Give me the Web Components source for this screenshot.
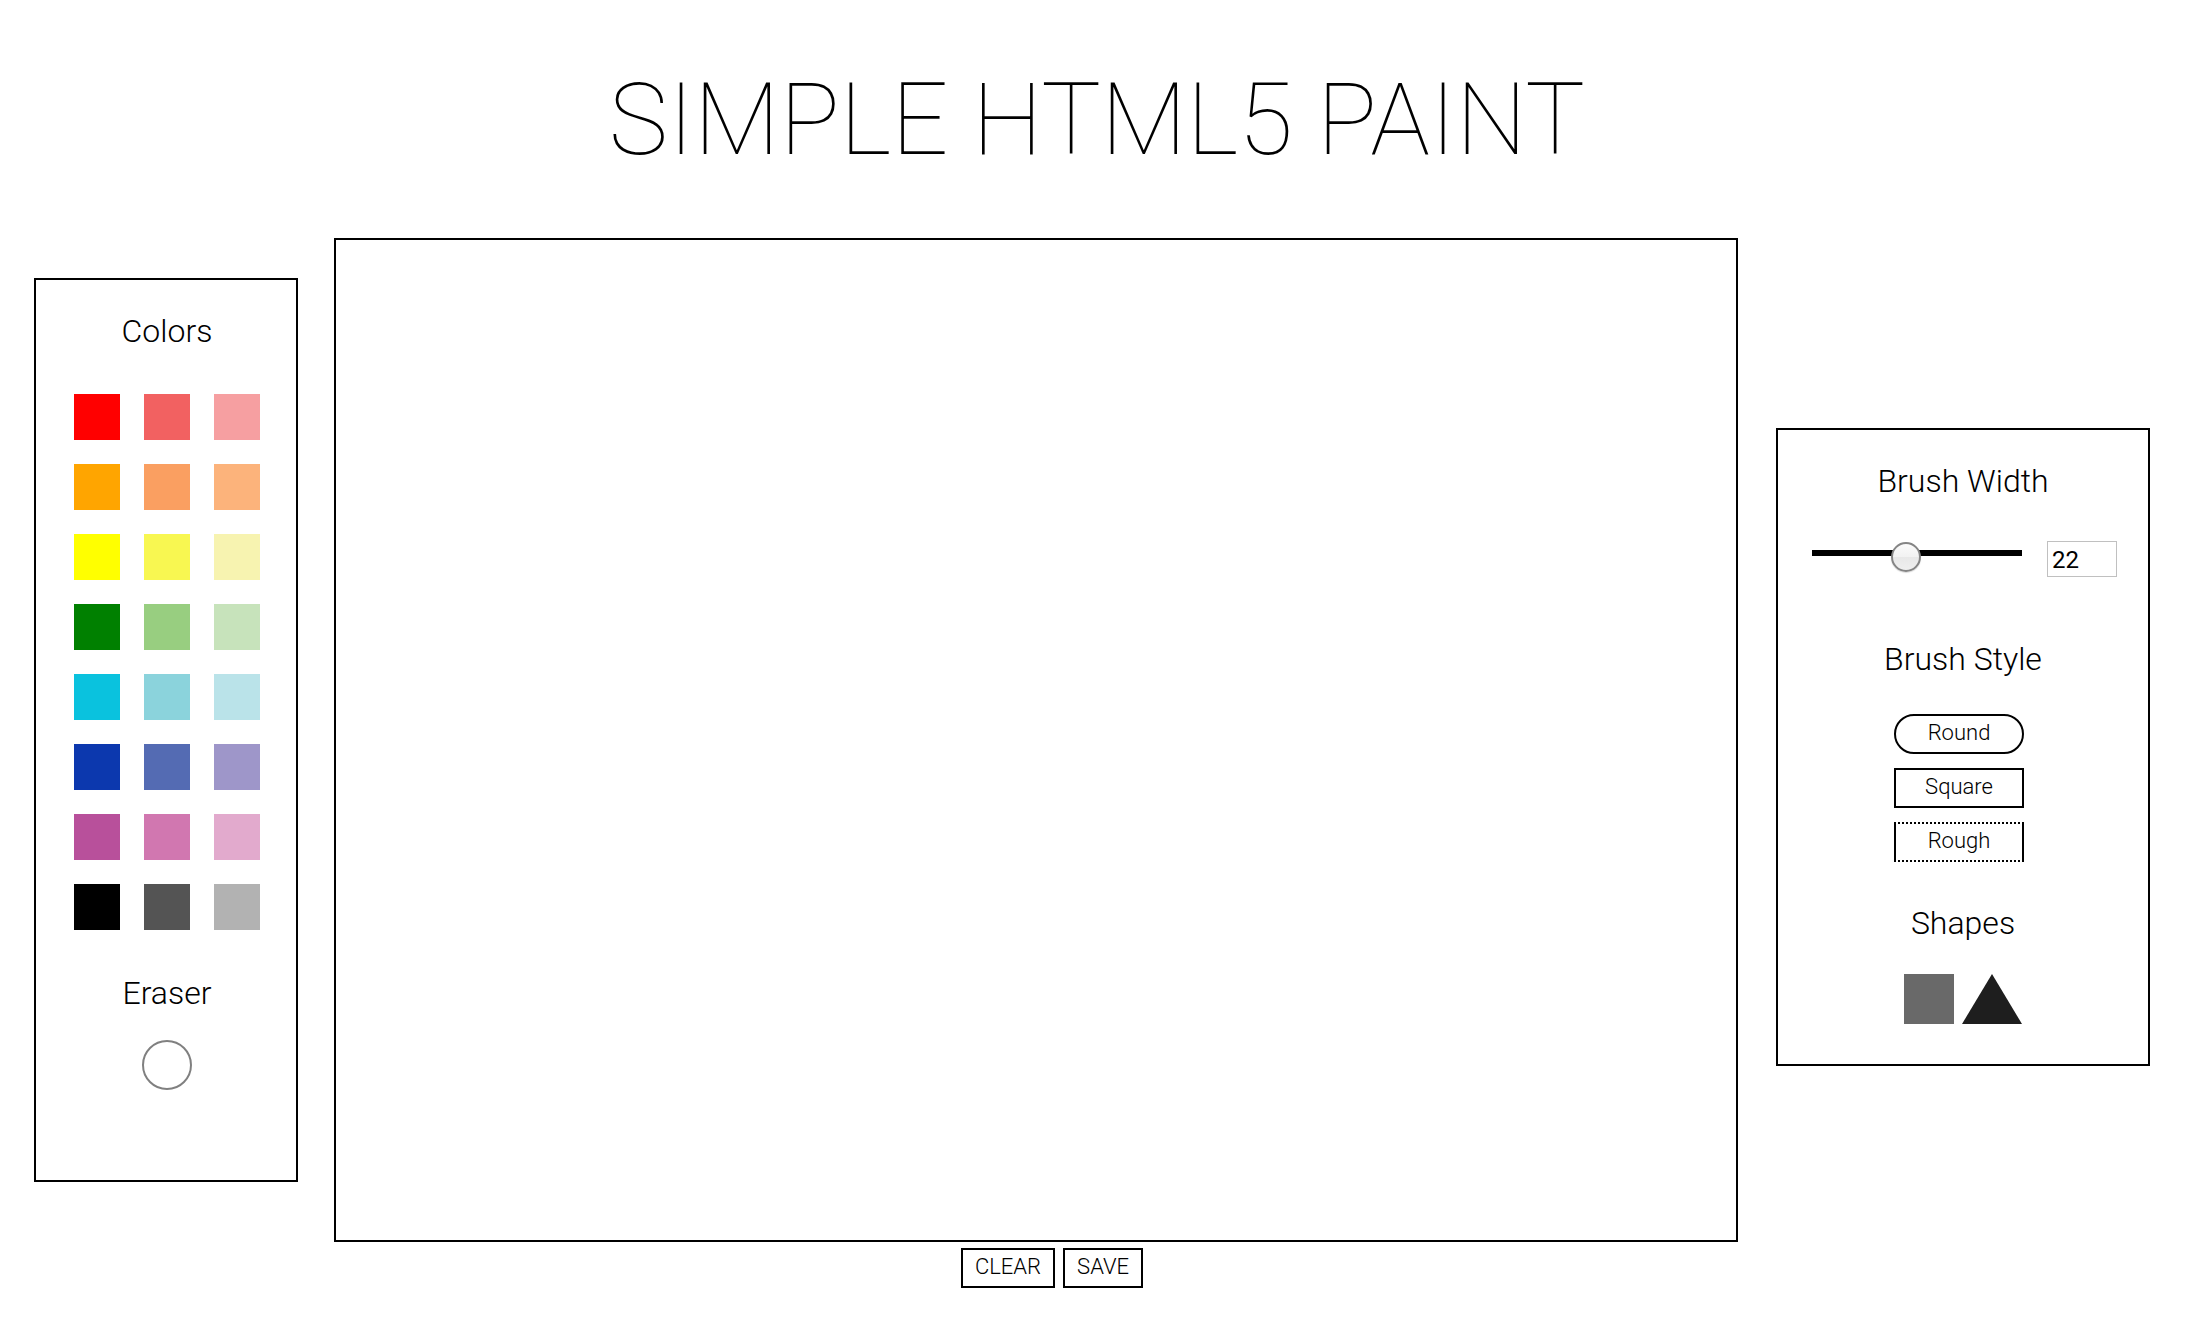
<!DOCTYPE html>
<html lang="en">
<head>
<meta charset="utf-8">
<title>Simple HTML5 Paint</title>
<style>
  body { margin: 0; background: #fff; color: #000; font-family: Roboto, "Liberation Sans", sans-serif; font-weight: 300; }
</style>
</head>
<body>
<paint-app></paint-app>

<template id="paint-app">
  <style>
    :host { display: block; }
    header { padding: 60px 20px 58px; text-align: center; }
    h1 { margin: 0; font-size: 100px; line-height: 120px; font-weight: 100; }
    main { display: flex; align-items: flex-start; padding: 0 44px 0 34px; }
    color-panel { margin-top: 40px; flex: none; }
    paint-canvas { flex: 1; min-width: 0; margin: 0 38px 0 36px; }
    brush-panel { margin-top: 190px; flex: none; }
  </style>
  <header><h1>SIMPLE HTML5 PAINT</h1></header>
  <main>
    <color-panel></color-panel>
    <paint-canvas></paint-canvas>
    <brush-panel></brush-panel>
  </main>
</template>

<template id="tool-button">
  <style>
    :host { display: block; }
    button { display: block; width: 100%; box-sizing: border-box; margin: 0; height: 40px; padding: 0 12px 2px; border: 2px solid #000; background: transparent; color: inherit; font: inherit; font-size: 22px; line-height: 34px; cursor: pointer; }
    :host([shape="round"]) button { border-radius: 20px; }
    :host([shape="rough"]) button { border-style: dotted solid; }
  </style>
  <button type="button"><slot></slot></button>
</template>

<template id="tool-heading">
  <style>
    :host { display: block; }
    h2 { margin: 0; font-size: 32px; line-height: 40px; font-weight: 300; text-align: center; }
  </style>
  <h2><slot></slot></h2>
</template>

<template id="color-panel">
  <style>
    :host { display: block; box-sizing: border-box; width: 264px; padding: 31px 0 90px 2px; border: 2px solid #000; }
    .swatches { display: grid; grid-template-columns: repeat(3, 46px); justify-content: center; gap: 24px; padding: 43px 0; }
    .eraser { display: block; box-sizing: border-box; width: 50px; height: 50px; margin: 27px auto 0; padding: 0; border: 2px solid #808080; border-radius: 50%; background: #fff; }
  </style>
  <tool-heading>Colors</tool-heading>
  <div class="swatches"></div>
  <tool-heading>Eraser</tool-heading>
  <button class="eraser" type="button" aria-label="Eraser"></button>
</template>

<template id="color-swatch">
  <style>
    :host { display: block; }
    button { display: block; width: 46px; height: 46px; padding: 0; border: 0; background: var(--swatch); cursor: pointer; }
  </style>
  <button type="button"></button>
</template>

<template id="paint-canvas">
  <style>
    :host { display: block; }
    canvas { display: block; box-sizing: border-box; width: 100%; height: 1004px; border: 2px solid #000; }
    .actions { display: flex; justify-content: center; gap: 8px; padding: 6px 0 0 32px; }
  </style>
  <canvas></canvas>
  <div class="actions">
    <tool-button>CLEAR</tool-button>
    <tool-button>SAVE</tool-button>
  </div>
</template>

<template id="brush-panel">
  <style>
    :host { display: block; box-sizing: border-box; width: 374px; padding: 31px 0 40px; border: 2px solid #000; }
    .width { display: flex; align-items: flex-start; justify-content: space-between; padding: 40px 31px 62px 34px; }
    input { box-sizing: border-box; margin: 0; }
    input[type="range"] { width: 210px; height: 24px; appearance: none; -webkit-appearance: none; background: transparent; }
    input[type="range"]::-webkit-slider-runnable-track { height: 6px; background: #000; }
    input[type="range"]::-webkit-slider-thumb { -webkit-appearance: none; box-sizing: border-box; width: 30px; height: 30px; margin-top: -8px; border: 2px solid #858585; border-radius: 50%; background: linear-gradient(#fbfbfb, #f2f2f2 50%, #e8e8e8 50%, #efefef); box-shadow: 0 1px 1px rgba(0,0,0,.15); }
    input[type="text"] { width: 70px; height: 36px; padding: 2px 4px 0; border: 1px solid #c0c0c0; background: #fff; color: #000; font-family: inherit; font-size: 24px; font-weight: 400; }
    .styles { display: flex; flex-direction: column; gap: 14px; width: 130px; padding: 35px 0 41px 116px; }
    .shapes { display: flex; justify-content: center; gap: 8px; margin-top: 31px; }
    .shapes button { display: block; height: 50px; padding: 0; border: 0; background: none; cursor: pointer; }
    svg { display: block; }
  </style>
  <tool-heading><label for="width">Brush Width</label></tool-heading>
  <div class="width">
    <input id="width" type="range" min="0" max="50" value="22">
    <input type="text" value="22" inputmode="numeric" aria-label="Brush Width">
  </div>
  <tool-heading>Brush Style</tool-heading>
  <div class="styles">
    <tool-button shape="round">Round</tool-button>
    <tool-button>Square</tool-button>
    <tool-button shape="rough">Rough</tool-button>
  </div>
  <tool-heading>Shapes</tool-heading>
  <div class="shapes">
    <button type="button" aria-label="Square"><svg width="50" height="50"><rect width="50" height="50" fill="#696969"/></svg></button>
    <button type="button" aria-label="Triangle"><svg width="60" height="50"><path d="M30 0L60 50H0z" fill="#1e1e1e"/></svg></button>
  </div>
</template>

<script>
  class TemplateElement extends HTMLElement {
    constructor() {
      super();
      const template = document.getElementById(this.localName);
      this.attachShadow({ mode: 'open' }).append(template.content.cloneNode(true));
    }
  }

  class ToolButton extends TemplateElement {}
  class ToolHeading extends TemplateElement {}
  class PaintCanvas extends TemplateElement {}

  class ColorSwatch extends TemplateElement {
    connectedCallback() {
      const color = this.getAttribute('color');
      this.style.setProperty('--swatch', color);
      this.shadowRoot.querySelector('button').setAttribute('aria-label', color);
    }
  }

  class ColorPanel extends TemplateElement {
    connectedCallback() {
      const colors = [
        '#ff0000', '#f26161', '#f69fa1',
        '#ffa500', '#fa9f61', '#fcb37b',
        '#ffff00', '#f8f751', '#f7f3b0',
        '#008000', '#98ce80', '#c7e3bb',
        '#0ac2de', '#8bd3dc', '#bae3e9',
        '#0c38ae', '#546bb3', '#9e96c9',
        '#b8509b', '#d177b0', '#e2aacd',
        '#000000', '#545454', '#b2b2b2'
      ];
      const grid = this.shadowRoot.querySelector('.swatches');
      grid.replaceChildren(...colors.map(color => {
        const swatch = document.createElement('color-swatch');
        swatch.setAttribute('color', color);
        return swatch;
      }));
    }
  }

  class BrushPanel extends TemplateElement {
    connectedCallback() {
      const [range, text] = this.shadowRoot.querySelectorAll('input');
      range.addEventListener('input', () => { text.value = range.value; });
      text.addEventListener('input', () => { range.value = text.value; });
    }
  }

  class PaintApp extends TemplateElement {}

  customElements.define('tool-button', ToolButton);
  customElements.define('tool-heading', ToolHeading);
  customElements.define('color-swatch', ColorSwatch);
  customElements.define('color-panel', ColorPanel);
  customElements.define('paint-canvas', PaintCanvas);
  customElements.define('brush-panel', BrushPanel);
  customElements.define('paint-app', PaintApp);
</script>
</body>
</html>
